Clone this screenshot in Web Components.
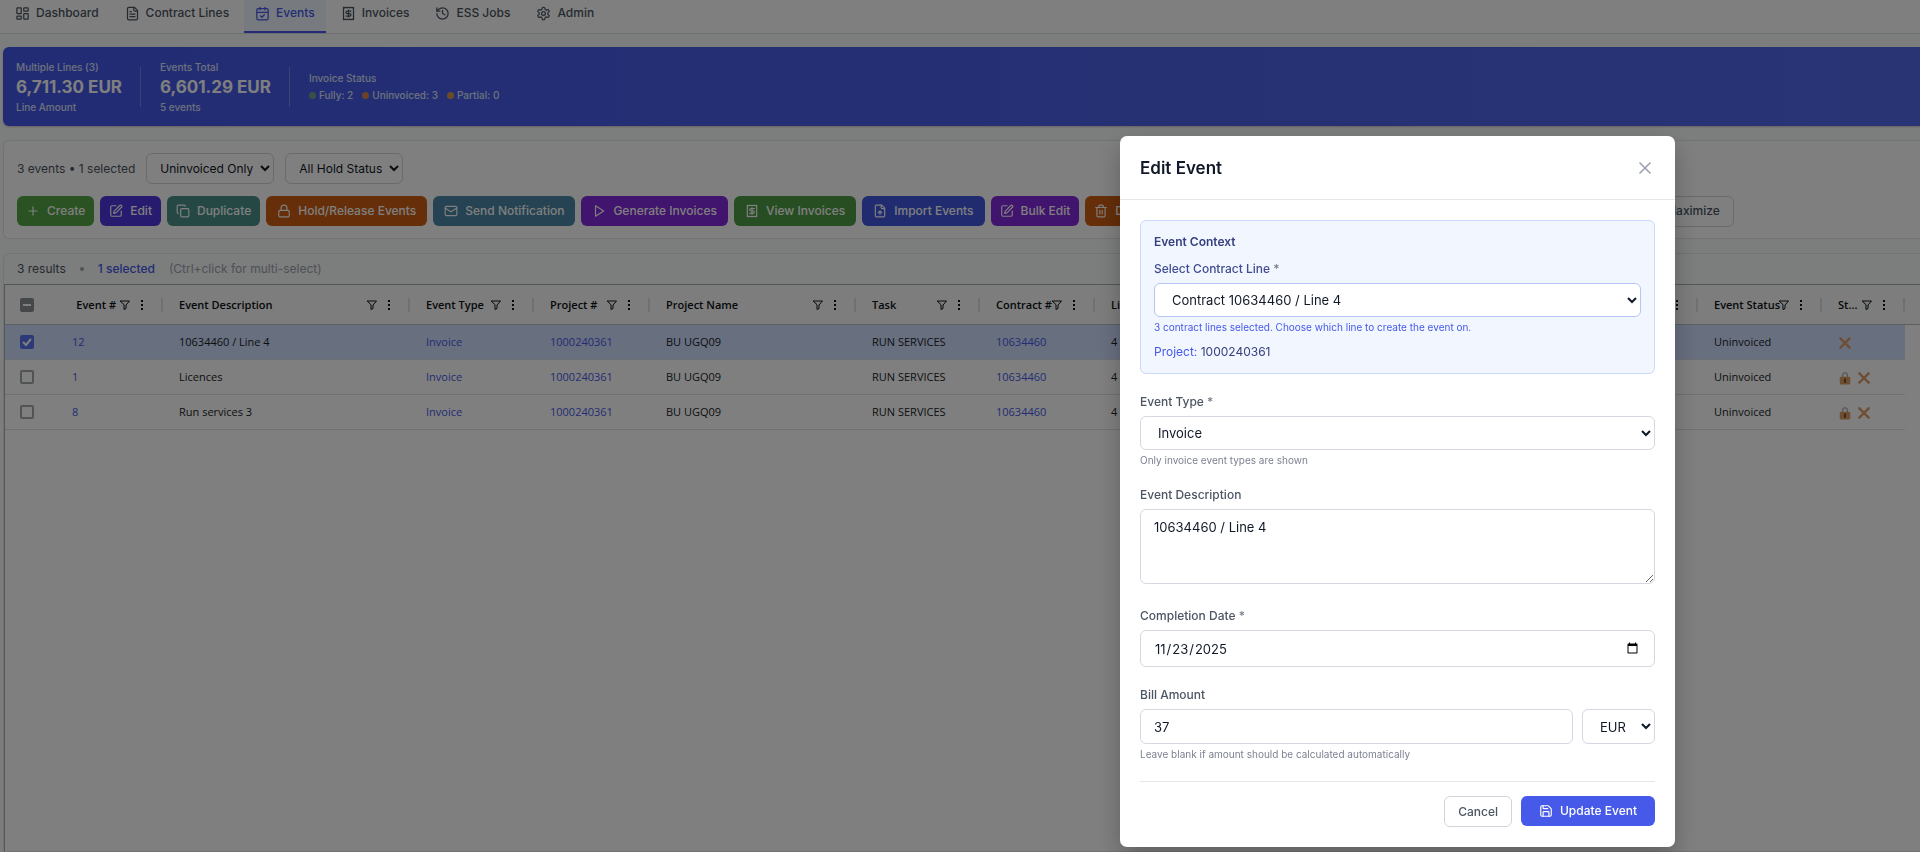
<!DOCTYPE html>
<html lang="en">
<head>
<meta charset="utf-8">
<title>Events</title>
<style>
  html, body { height: 100%; }
  body { margin: 0; overflow: hidden; background: #f9fafb; color: #111827; font: 12px/16px Inter, "Liberation Sans", sans-serif; }
</style>
</head>
<body>
<events-app></events-app>

<script>
const ICONS = {
  dashboard: '<rect x="3" y="3" width="7" height="9" rx="1"/><rect x="14" y="3" width="7" height="5" rx="1"/><rect x="14" y="12" width="7" height="9" rx="1"/><rect x="3" y="16" width="7" height="5" rx="1"/>',
  file: '<path d="M15 2H6a2 2 0 0 0-2 2v16a2 2 0 0 0 2 2h12a2 2 0 0 0 2-2V7Z"/><path d="M14 2v4a2 2 0 0 0 2 2h4M10 9H8M16 13H8M16 17H8"/>',
  calendar: '<path d="M8 2v4M16 2v4"/><rect x="3" y="4" width="18" height="18" rx="2"/><path d="M3 10h18M9 16l2 2 4-4"/>',
  receipt: '<path d="M4 2v20l2-1 2 1 2-1 2 1 2-1 2 1 2-1 2 1V2l-2 1-2-1-2 1-2-1-2 1-2-1-2 1Z"/><path d="M16 8h-6a2 2 0 1 0 0 4h4a2 2 0 1 1 0 4H8M12 17.500V6.500"/>',
  history: '<path d="M3 12a9 9 0 1 0 9-9 9.750 9.750 0 0 0-6.740 2.740L3 8"/><path d="M3 3v5h5M12 7v5l4 2"/>',
  settings: '<path d="M12.220 2h-.44a2 2 0 0 0-2 2v.18a2 2 0 0 1-1 1.730l-.43.25a2 2 0 0 1-2 0l-.15-.08a2 2 0 0 0-2.730.73l-.22.38a2 2 0 0 0 .73 2.730l.15.1a2 2 0 0 1 1 1.720v.51a2 2 0 0 1-1 1.740l-.15.09a2 2 0 0 0-.73 2.730l.22.38a2 2 0 0 0 2.730.73l.15-.08a2 2 0 0 1 2 0l.43.25a2 2 0 0 1 1 1.730V20a2 2 0 0 0 2 2h.44a2 2 0 0 0 2-2v-.18a2 2 0 0 1 1-1.730l.43-.25a2 2 0 0 1 2 0l.15.08a2 2 0 0 0 2.730-.73l.22-.39a2 2 0 0 0-.73-2.730l-.15-.08a2 2 0 0 1-1-1.740v-.5a2 2 0 0 1 1-1.740l.15-.09a2 2 0 0 0 .73-2.730l-.22-.38a2 2 0 0 0-2.730-.73l-.15.08a2 2 0 0 1-2 0l-.43-.25a2 2 0 0 1-1-1.730V4a2 2 0 0 0-2-2z"/><circle cx="12" cy="12" r="3"/>',
  plus: '<path d="M5 12h14M12 5v14"/>',
  edit: '<path d="M12 3H5a2 2 0 0 0-2 2v14a2 2 0 0 0 2 2h14a2 2 0 0 0 2-2v-7"/><path d="M18.375 2.625a1 1 0 0 1 3 3l-9.013 9.014a2 2 0 0 1-.853.505l-2.873.84a.5.5 0 0 1-.62-.62l.84-2.873a2 2 0 0 1 .506-.852z"/>',
  copy: '<rect x="8" y="8" width="14" height="14" rx="2"/><path d="M4 16c-1.100 0-2-.9-2-2V4c0-1.100.9-2 2-2h10c1.100 0 2 .9 2 2"/>',
  lock: '<rect x="3" y="11" width="18" height="11" rx="2"/><path d="M7 11V7a5 5 0 0 1 10 0v4"/>',
  mail: '<rect x="2" y="4" width="20" height="16" rx="2"/><path d="m22 7-8.970 5.700a1.940 1.940 0 0 1-2.060 0L2 7"/>',
  play: '<path d="M6 3l14 9-14 9z"/>',
  upload: '<path d="M15 2H6a2 2 0 0 0-2 2v16a2 2 0 0 0 2 2h12a2 2 0 0 0 2-2V7Z"/><path d="M14 2v4a2 2 0 0 0 2 2h4M12 18v-6M9 15l3-3 3 3"/>',
  trash: '<path d="M3 6h18M19 6v14a2 2 0 0 1-2 2H7a2 2 0 0 1-2-2V6M8 6V4a2 2 0 0 1 2-2h4a2 2 0 0 1 2 2v2M10 11v6M14 11v6"/>',
  save: '<path d="M15.200 3a2 2 0 0 1 1.400.6l3.800 3.800a2 2 0 0 1 .6 1.400V19a2 2 0 0 1-2 2H5a2 2 0 0 1-2-2V5a2 2 0 0 1 2-2z"/><path d="M17 21v-7a1 1 0 0 0-1-1H8a1 1 0 0 0-1 1v7M7 3v4a1 1 0 0 0 1 1h7"/>',
  close: '<path d="M18 6 6 18M6 6l12 12"/>',
  filter: '<path d="M3 4h18l-7 8v7l-4 2v-9z"/>',
  dots: '<g fill="currentColor" stroke="none"><rect x="10" y="2" width="4" height="4"/><rect x="10" y="10" width="4" height="4"/><rect x="10" y="18" width="4" height="4"/></g>',
  cross: '<path d="M4 4l16 16M20 4 4 20" stroke="#dc9c68" stroke-width="4"/>',
  padlock: '<path d="M8 11V7a4 4 0 0 1 8 0v4" stroke="#a8a8a8" stroke-width="2"/><rect x="3" y="10" width="18" height="13" rx="2" fill="#dc9c60" stroke="none"/><path d="M12 14v5" stroke="#5a4636" stroke-width="3"/>'
};

function define(name, html, init) {
  const template = document.createElement('template');
  template.innerHTML = '<style>*,*::before{box-sizing:border-box}:host{display:block}[hidden]{display:none}</style>' + html;
  customElements.define(name, class extends HTMLElement {
    constructor() {
      super();
      this.attachShadow({ mode: 'open' }).append(template.content.cloneNode(true));
    }
    connectedCallback() { if (init) init(this.shadowRoot, this); }
  });
}

define('ui-icon', `<style>
  :host { display: inline-block; flex: none; width: 16px; height: 16px; }
  svg { display: block; width: 100%; height: 100%; }
</style><svg viewBox="0 0 24 24" fill="none" stroke="currentColor" stroke-width="2" stroke-linecap="round" stroke-linejoin="round" aria-hidden="true"></svg>`,
(root, host) => { root.querySelector('svg').innerHTML = ICONS[host.getAttribute('name')]; });

define('nav-tab', `<style>
  a { display: flex; align-items: center; gap: 6px; height: 38px; padding: 0 11px; border-bottom: 2px solid transparent; color: #4b5563; font-weight: 500; text-decoration: none; }
  :host([active]) a { background: #eff6ff; border-color: #4659e8; color: #4659e8; }
</style><a href="#"><slot name="icon"></slot><slot></slot></a>`);

define('app-nav', `<style>
  nav { display: flex; align-items: flex-end; gap: 4px; height: 34px; padding: 0 4px; background: #fff; border-bottom: 1px solid #d9dcdf; }
  ui-icon { width: 15px; height: 15px; }
</style><nav>
  <nav-tab><ui-icon slot="icon" name="dashboard"></ui-icon>Dashboard</nav-tab>
  <nav-tab><ui-icon slot="icon" name="file"></ui-icon>Contract Lines</nav-tab>
  <nav-tab active><ui-icon slot="icon" name="calendar"></ui-icon>Events</nav-tab>
  <nav-tab><ui-icon slot="icon" name="receipt"></ui-icon>Invoices</nav-tab>
  <nav-tab><ui-icon slot="icon" name="history"></ui-icon>ESS Jobs</nav-tab>
  <nav-tab><ui-icon slot="icon" name="settings"></ui-icon>Admin</nav-tab>
</nav>`);

define('summary-banner', `<style>
  :host { display: flex; align-items: center; height: 79px; padding: 0 13px; color: #dde2fb; font-size: 10px; font-weight: 500; line-height: 14px; border-radius: 6px 0 0 6px; background: linear-gradient(90deg, #4458e8, #5269ea); box-shadow: 0 1px 2px rgba(0,0,0,.2); }
  .stat { padding-right: 18px; margin-right: 19px; border-right: 1px solid rgba(255,255,255,.25); height: 40px; display: flex; flex-direction: column; justify-content: center; }
  .stat:last-child { border: 0; }
  strong { font-size: 17px; line-height: 26px; color: #fff; }
  .legend { display: flex; gap: 9px; margin-top: 3px; }
  .legend span { display: flex; align-items: center; gap: 3px; }
  i { width: 7px; height: 7px; border-radius: 50%; }
</style>
<div class="stat"><span>Multiple Lines (3)</span><strong>6,711.30 EUR</strong><span>Line Amount</span></div>
<div class="stat"><span>Events Total</span><strong>6,601.29 EUR</strong><span>5 events</span></div>
<div class="stat"><span>Invoice Status</span><div class="legend">
  <span><i style="background:#6fa586"></i>Fully: 2</span>
  <span><i style="background:#d8854e"></i>Uninvoiced: 3</span>
  <span><i style="background:#d8994e"></i>Partial: 0</span>
</div></div>`);

define('action-button', `<style>
  button { display: flex; align-items: center; gap: 7px; height: 30px; padding: 0 var(--pad, 11px); border: 0; border-radius: 6px; background: var(--tone, #4659e8); color: #fff; font: 500 12px/16px Inter, "Liberation Sans", sans-serif; white-space: nowrap; }
  :host([compact]) button { padding: 0 9px; }
  :host([outline]) button { height: 31px; padding: 0 13px; background: #fff; border: 1px solid #d1d5db; color: #4b5563; }
</style><button type="button"><slot name="icon"></slot><slot></slot></button>`);

define('filter-bar', `<style>
  :host { padding: 12px 13px; background: #fff; border: 1px solid #e5e7eb; border-right: 0; border-radius: 6px 0 0 6px; }
  .row { display: flex; align-items: center; }
  .filters { gap: 11px; margin-bottom: 12px; color: #4b5563; }
  .actions { gap: 6px; height: 30px; }
  select { height: 31px; padding: 0 4px 0 9px; border: 1px solid #d1d5db; border-radius: 6px; background: #fff; color: #111827; font: 12px/16px Inter, "Liberation Sans", sans-serif; }
  ui-icon { width: 14px; height: 14px; }
  .spacer { flex: 0 0 478px; }
</style>
<div class="row filters"><span>3 events • 1 selected</span>
  <select aria-label="Invoice filter"><option>Uninvoiced Only</option></select>
  <select aria-label="Hold filter"><option>All Hold Status</option></select></div>
<div class="row actions">
  <action-button compact style="--tone:#55a446"><ui-icon slot="icon" name="plus"></ui-icon>Create</action-button>
  <action-button compact style="--tone:#4f36e0"><ui-icon slot="icon" name="edit"></ui-icon>Edit</action-button>
  <action-button compact style="--tone:#4a9188"><ui-icon slot="icon" name="copy"></ui-icon>Duplicate</action-button>
  <action-button style="--tone:#cc5d12"><ui-icon slot="icon" name="lock"></ui-icon>Hold/Release Events</action-button>
  <action-button style="--tone:#4a86a4"><ui-icon slot="icon" name="mail"></ui-icon>Send Notification</action-button>
  <action-button style="--tone:#8328dc"><ui-icon slot="icon" name="play"></ui-icon>Generate Invoices</action-button>
  <action-button style="--tone:#4f9c44"><ui-icon slot="icon" name="receipt"></ui-icon>View Invoices</action-button>
  <action-button style="--tone:#4259e0"><ui-icon slot="icon" name="upload"></ui-icon>Import Events</action-button>
  <action-button compact style="--tone:#8328dc"><ui-icon slot="icon" name="edit"></ui-icon>Bulk Edit</action-button>
  <action-button compact style="--tone:#cc5d12"><ui-icon slot="icon" name="trash"></ui-icon>Delete</action-button>
  <div class="spacer"></div>
  <action-button outline>Maximize</action-button>
</div>`);

const COLUMNS = [
  ['Event #', 107, 'end'], ['Event Description', 247], ['Event Type', 124], ['Project #', 116], ['Project Name', 206],
  ['Task', 124], ['Contract #', 115], ['Line #', 104], ['', 499], ['Event Status', 124], ['St...', 83]
];
const ROWS = [['12', '10634460 / Line 4', false], ['1', 'Licences', true], ['8', 'Run services 3', true]];

define('events-grid', `<style>
  :host { display: flex; flex-direction: column; flex: 1; border: 1px solid #e5e7eb; border-right: 0; border-radius: 6px 0 0 0; }
  .status { display: flex; align-items: center; gap: 14px; height: 30px; padding: 0 13px; color: #4b5563; }
  .status b { color: #4659e8; font-weight: 500; }
  .status i { width: 4px; height: 4px; border-radius: 50%; background: #9ca3af; }
  .status small { color: #9ca3af; font-size: 12px; }
  .grid { flex: 1; border: solid #a9adb5; border-width: 1px 0 0 1px; background: #fff; }
  table { border-collapse: separate; border-spacing: 0; table-layout: fixed; width: 100%; font: 11px/16px "Open Sans", "Noto Sans", sans-serif; color: #181d1f; }
  th, td { padding: 0 16px; text-align: left; white-space: nowrap; overflow: hidden; }
  thead th { height: 40px; padding: 0; background: #fafafa; border-bottom: 1px solid #babfc7; font-weight: 600; color: #0c1012; }
  th div { display: flex; align-items: center; height: 14px; padding: 0 13px 0 16px; border-right: 2px solid #dfe1e3; }
  th:first-child div { border: 0; padding-left: 15px; }
  th span { flex: 1; min-width: 0; }
  .end span { text-align: right; padding-right: 3px; }
  th ui-icon { width: 12px; height: 12px; margin-right: 5px; }
  th ui-icon + ui-icon { margin: 0; }
  td { height: 35px; border-bottom: 1px solid #dfe1e3; }
  td:first-child { padding-left: 15px; }
  tr.on td { background: #d0deff; }
  tr td:last-child { border: 0; background: none; }
  td a { color: #4659e8; text-decoration: none; }
  td ui-icon { width: 14px; height: 14px; margin-right: 5px; vertical-align: middle; }
  input { appearance: none; display: block; width: 14px; height: 14px; margin: 0; border: 2px solid #a3a8aa; border-radius: 2px; background: #fff center/12px no-repeat; }
  input:checked { border-color: #5a74f0; background-color: #5a74f0; background-image: url('data:image/svg+xml,<svg xmlns="http://www.w3.org/2000/svg" viewBox="0 0 12 12"><path d="M2 6l3 3 5-6" fill="none" stroke="white" stroke-width="2"/></svg>'); }
  input.some { border-color: #8a9092; background-color: #8a9092; background-image: url('data:image/svg+xml,<svg xmlns="http://www.w3.org/2000/svg" viewBox="0 0 12 12"><path d="M2 6h8" stroke="white" stroke-width="2"/></svg>'); }
</style>
<div class="status"><span>3 results</span><i></i><b>1 selected</b><small>(Ctrl+click for multi-select)</small></div>
<div class="grid"><table><colgroup></colgroup><thead><tr></tr></thead><tbody></tbody></table></div>`,
root => {
  root.querySelector('colgroup').innerHTML = '<col style="width:51px">' + COLUMNS.map(c => `<col style="width:${c[1]}px">`).join('') + '<col>';
  root.querySelector('thead tr').innerHTML = '<th><div><input class="some" type="checkbox" aria-label="Select all"></div></th>' + COLUMNS.map(([name, , cls]) =>
    `<th class="${cls || ''}"><div><span>${name}</span><ui-icon name="filter"></ui-icon><ui-icon name="dots"></ui-icon></div></th>`).join('') + '<th></th>';
  root.querySelector('tbody').innerHTML = ROWS.map(([id, text, held], i) => `<tr class="${i ? '' : 'on'}">
    <td><input type="checkbox" aria-label="Select event ${id}" ${i ? '' : 'checked'}></td>
    <td><a href="#">${id}</a></td><td>${text}</td><td><a href="#">Invoice</a></td><td><a href="#">1000240361</a></td>
    <td>BU UGQ09</td><td>RUN SERVICES</td><td><a href="#">10634460</a></td><td>4</td><td></td><td>Uninvoiced</td>
    <td>${held ? '<ui-icon name="padlock"></ui-icon>' : ''}<ui-icon name="cross"></ui-icon></td><td></td></tr>`).join('');
});

define('form-field', `<style>
  :host { display: flex; flex-direction: column; }
  .hint { font-size: 10px; line-height: 14px; margin-top: 3px; color: var(--hint, #7d8292); }
</style><slot name="label"></slot><slot></slot><div class="hint"><slot name="hint"></slot></div>`,
(root, host) => { root.querySelector('.hint').hidden = !host.querySelector('[slot=hint]'); });

define('event-dialog', `<style>
  section { width: 555px; padding-bottom: 20px; background: #fff; border-radius: 7px; box-shadow: 0 10px 25px rgba(0,0,0,.25); }
  header { display: flex; align-items: center; justify-content: space-between; height: 64px; padding: 0 20px; border-bottom: 1px solid #e5e7eb; }
  h2 { margin: 0; font: 600 17px/24px Inter, "Liberation Sans", sans-serif; color: #111827; }
  header button { display: flex; padding: 0; border: 0; background: none; color: #9ca3af; }
  header ui-icon { width: 20px; height: 20px; }
  form { padding: 20px 20px 0; }
  fieldset { margin: 0 0 20px; padding: 13px 13px; border: 1px solid #cdd9fb; border-radius: 6px; background: #f1f6ff; --hint: #4659e8; }
  h3 { margin: 0 0 11px; font: 600 12px/16px Inter, "Liberation Sans", sans-serif; color: #36407f; }
  fieldset label { color: #414c92; }
  fieldset p { margin: 10px 0 0; color: #36407f; }
  fieldset p span { color: #4659e8; }
  label { display: block; margin-bottom: 6px; font-weight: 500; color: #4b5563; }
  form-field { margin-bottom: 20px; }
  fieldset form-field { margin: 0; }
  em { font-style: normal; color: #777d88; }
  select, input, textarea { display: block; width: 100%; height: 34px; margin: 0; padding: 0 13px; border: 1px solid #d5d8e0; border-radius: 6px; background: #fff; color: #111827; font: 13px/18px Inter, "Liberation Sans", sans-serif; }
  fieldset select { border-color: #b5c5f8; }
  textarea { height: 75px; margin-bottom: 4px; padding: 8px 13px; resize: vertical; }
  input[type=date] { height: 37px; }
  .money { display: flex; gap: 9px; }
  .money input { height: 35px; }
  .money select { width: 73px; height: 35px; flex: none; padding-right: 4px; }
  footer { display: flex; justify-content: flex-end; gap: 9px; padding-top: 14px; border-top: 1px solid #e5e7eb; }
  footer ui-icon { width: 14px; height: 14px; }
</style>
<section role="dialog" aria-labelledby="title">
  <header><h2 id="title">Edit Event</h2><button type="button" aria-label="Close"><ui-icon name="close"></ui-icon></button></header>
  <form>
    <fieldset>
      <h3>Event Context</h3>
      <form-field><label slot="label" for="line">Select Contract Line <em>*</em></label>
        <select id="line"><option>Contract 10634460 / Line 4</option></select>
        <span slot="hint">3 contract lines selected. Choose which line to create the event on.</span></form-field>
      <p><span>Project:</span> 1000240361</p>
    </fieldset>
    <form-field><label slot="label" for="type">Event Type <em>*</em></label>
      <select id="type"><option>Invoice</option></select><span slot="hint">Only invoice event types are shown</span></form-field>
    <form-field><label slot="label" for="desc">Event Description</label><textarea id="desc">10634460 / Line 4</textarea></form-field>
    <form-field><label slot="label" for="date">Completion Date <em>*</em></label><input id="date" type="date" value="2025-11-23"></form-field>
    <form-field><label slot="label" for="amount">Bill Amount</label>
      <div class="money"><input id="amount" value="37"><select aria-label="Currency"><option>EUR</option></select></div>
      <span slot="hint">Leave blank if amount should be calculated automatically</span></form-field>
    <footer><action-button outline>Cancel</action-button><action-button style="--pad:18px"><ui-icon slot="icon" name="save"></ui-icon>Update Event</action-button></footer>
  </form>
</section>`);

define('events-app', `<style>
  :host { height: 100vh; }
  .page { display: flex; flex-direction: column; height: 100%; overflow: hidden; }
  main { flex: 1; display: flex; flex-direction: column; gap: 14px; padding: 13px 0 0 3px; }
  .backdrop { position: fixed; inset: 0; display: flex; justify-content: flex-end; align-items: flex-start; padding: 136px 245px 0 0; background: rgba(0,0,0,.5); }
</style>
<div class="page"><app-nav></app-nav><main><summary-banner></summary-banner><filter-bar></filter-bar><events-grid></events-grid></main></div>
<div class="backdrop"><event-dialog></event-dialog></div>`);
</script>
</body>
</html>
